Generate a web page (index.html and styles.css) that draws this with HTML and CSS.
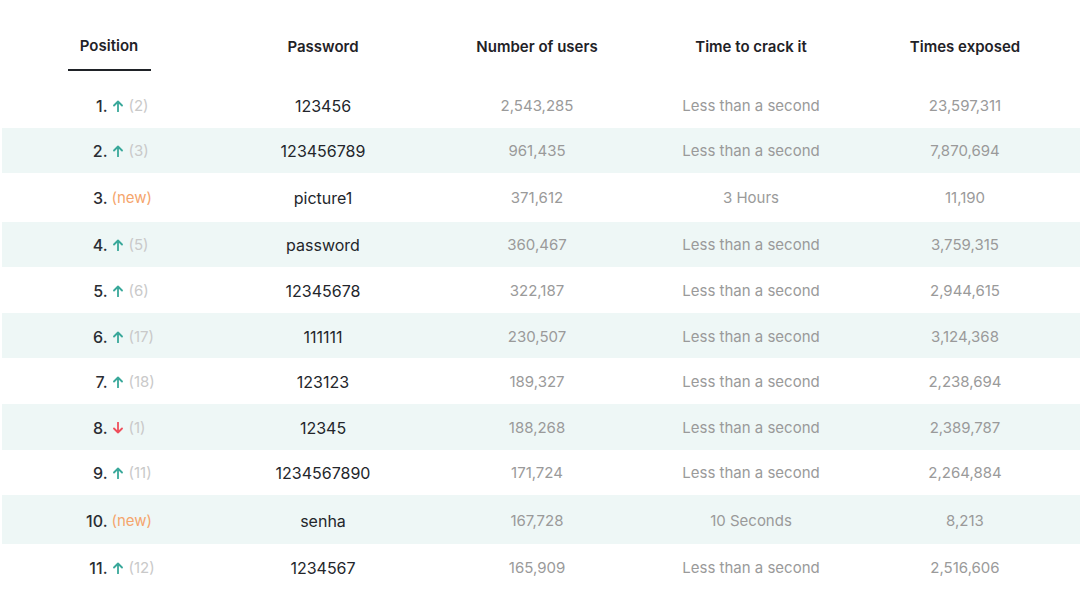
FILE: index.html
```html
<!DOCTYPE html>
<html lang="en">
<head>
<meta charset="utf-8">
<title>Most common passwords</title>
<link rel="stylesheet" href="styles.css">
</head>
<body>
<div class="table">
  <div class="head">
    <div class="hcell"><span class="hlabel active">Position</span></div>
    <div class="hcell"><span class="hlabel">Password</span></div>
    <div class="hcell"><span class="hlabel">Number of users</span></div>
    <div class="hcell"><span class="hlabel">Time to crack it</span></div>
    <div class="hcell"><span class="hlabel">Times exposed</span></div>
  </div>

  <div class="row">
    <div class="cell pos"><span class="rank">1.</span><span class="trend"><svg class="arr up" viewBox="0 0 10 12"><path d="M5 11.5V1.5M1 5.5L5 1.5L9 5.5"/></svg><span class="prev">(2)</span></span></div>
    <div class="cell pw">123456</div>
    <div class="cell num">2,543,285</div>
    <div class="cell num">Less than a second</div>
    <div class="cell num">23,597,311</div>
  </div>
  <div class="row alt">
    <div class="cell pos"><span class="rank">2.</span><span class="trend"><svg class="arr up" viewBox="0 0 10 12"><path d="M5 11.5V1.5M1 5.5L5 1.5L9 5.5"/></svg><span class="prev">(3)</span></span></div>
    <div class="cell pw">123456789</div>
    <div class="cell num">961,435</div>
    <div class="cell num">Less than a second</div>
    <div class="cell num">7,870,694</div>
  </div>
  <div class="row tall">
    <div class="cell pos"><span class="rank">3.</span><span class="trend"><span class="new">(new)</span></span></div>
    <div class="cell pw">picture1</div>
    <div class="cell num">371,612</div>
    <div class="cell num">3 Hours</div>
    <div class="cell num">11,190</div>
  </div>
  <div class="row alt">
    <div class="cell pos"><span class="rank">4.</span><span class="trend"><svg class="arr up" viewBox="0 0 10 12"><path d="M5 11.5V1.5M1 5.5L5 1.5L9 5.5"/></svg><span class="prev">(5)</span></span></div>
    <div class="cell pw">password</div>
    <div class="cell num">360,467</div>
    <div class="cell num">Less than a second</div>
    <div class="cell num">3,759,315</div>
  </div>
  <div class="row">
    <div class="cell pos"><span class="rank">5.</span><span class="trend"><svg class="arr up" viewBox="0 0 10 12"><path d="M5 11.5V1.5M1 5.5L5 1.5L9 5.5"/></svg><span class="prev">(6)</span></span></div>
    <div class="cell pw">12345678</div>
    <div class="cell num">322,187</div>
    <div class="cell num">Less than a second</div>
    <div class="cell num">2,944,615</div>
  </div>
  <div class="row alt">
    <div class="cell pos"><span class="rank">6.</span><span class="trend"><svg class="arr up" viewBox="0 0 10 12"><path d="M5 11.5V1.5M1 5.5L5 1.5L9 5.5"/></svg><span class="prev">(17)</span></span></div>
    <div class="cell pw">111111</div>
    <div class="cell num">230,507</div>
    <div class="cell num">Less than a second</div>
    <div class="cell num">3,124,368</div>
  </div>
  <div class="row">
    <div class="cell pos"><span class="rank">7.</span><span class="trend"><svg class="arr up" viewBox="0 0 10 12"><path d="M5 11.5V1.5M1 5.5L5 1.5L9 5.5"/></svg><span class="prev">(18)</span></span></div>
    <div class="cell pw">123123</div>
    <div class="cell num">189,327</div>
    <div class="cell num">Less than a second</div>
    <div class="cell num">2,238,694</div>
  </div>
  <div class="row alt">
    <div class="cell pos"><span class="rank">8.</span><span class="trend"><svg class="arr down" viewBox="0 0 10 12"><path d="M5 0.5V10.5M1 6.5L5 10.5L9 6.5"/></svg><span class="prev">(1)</span></span></div>
    <div class="cell pw">12345</div>
    <div class="cell num">188,268</div>
    <div class="cell num">Less than a second</div>
    <div class="cell num">2,389,787</div>
  </div>
  <div class="row">
    <div class="cell pos"><span class="rank">9.</span><span class="trend"><svg class="arr up" viewBox="0 0 10 12"><path d="M5 11.5V1.5M1 5.5L5 1.5L9 5.5"/></svg><span class="prev">(11)</span></span></div>
    <div class="cell pw">1234567890</div>
    <div class="cell num">171,724</div>
    <div class="cell num">Less than a second</div>
    <div class="cell num">2,264,884</div>
  </div>
  <div class="row alt tall">
    <div class="cell pos"><span class="rank">10.</span><span class="trend"><span class="new">(new)</span></span></div>
    <div class="cell pw">senha</div>
    <div class="cell num">167,728</div>
    <div class="cell num">10 Seconds</div>
    <div class="cell num">8,213</div>
  </div>
  <div class="row">
    <div class="cell pos"><span class="rank">11.</span><span class="trend"><svg class="arr up" viewBox="0 0 10 12"><path d="M5 11.5V1.5M1 5.5L5 1.5L9 5.5"/></svg><span class="prev">(12)</span></span></div>
    <div class="cell pw">1234567</div>
    <div class="cell num">165,909</div>
    <div class="cell num">Less than a second</div>
    <div class="cell num">2,516,606</div>
  </div>
</div>
</body>
</html>
```

FILE: styles.css
```css
html, body {
  margin: 0;
  padding: 0;
  background: #ffffff;
}

body {
  font-family: Inter, "Noto Sans", "Liberation Sans", sans-serif;
  font-size: 15px;
  color: #222428;
}

.table {
  width: 1078px;
  margin-left: 2px;
}

.head {
  display: grid;
  grid-template-columns: repeat(5, 214px);
  margin-bottom: 11px;
}

.hcell {
  display: flex;
  justify-content: center;
  padding-top: 36px;
}

.hlabel {
  display: inline-block;
  line-height: 22px;
  padding-bottom: 11px;
  border-bottom: 2px solid transparent;
  font-weight: 600;
  font-size: 15px;
  color: #1f2227;
  text-align: center;
}

.hlabel.active {
  width: 83px;
  border-bottom-color: #1f2227;
  margin-top: -1px;
  padding-bottom: 12px;
}

.row {
  display: grid;
  grid-template-columns: repeat(5, 214px);
  height: 45.6px;
  align-items: center;
  padding-top: 2px;
  box-sizing: border-box;
}

.row.tall {
  height: 48.5px;
}

.row.alt {
  background: #eef7f6;
}

.cell {
  text-align: center;
  line-height: 22px;
  white-space: nowrap;
}

.pw {
  color: #23262b;
  font-size: 16px;
}

.num {
  color: #9a9a9a;
}

.pos {
  display: flex;
  justify-content: center;
  align-items: center;
}

.rank {
  width: 44px;
  text-align: right;
  color: #2a2d33;
  font-size: 16px;
  font-weight: 500;
}

.trend {
  width: 42px;
  margin-left: 5px;
  display: flex;
  align-items: center;
  text-align: left;
}

.arr {
  width: 10px;
  height: 12px;
  margin-right: 6px;
  flex: none;
}

.arr path {
  fill: none;
  stroke-width: 1.8;
  stroke-linecap: round;
  stroke-linejoin: round;
}

.arr.up path {
  stroke: #39a89a;
}

.arr.down path {
  stroke: #ef4f5c;
}

.prev {
  color: #c9c9c9;
}

.new {
  color: #f5a56c;
  margin-left: -1px;
}
```
